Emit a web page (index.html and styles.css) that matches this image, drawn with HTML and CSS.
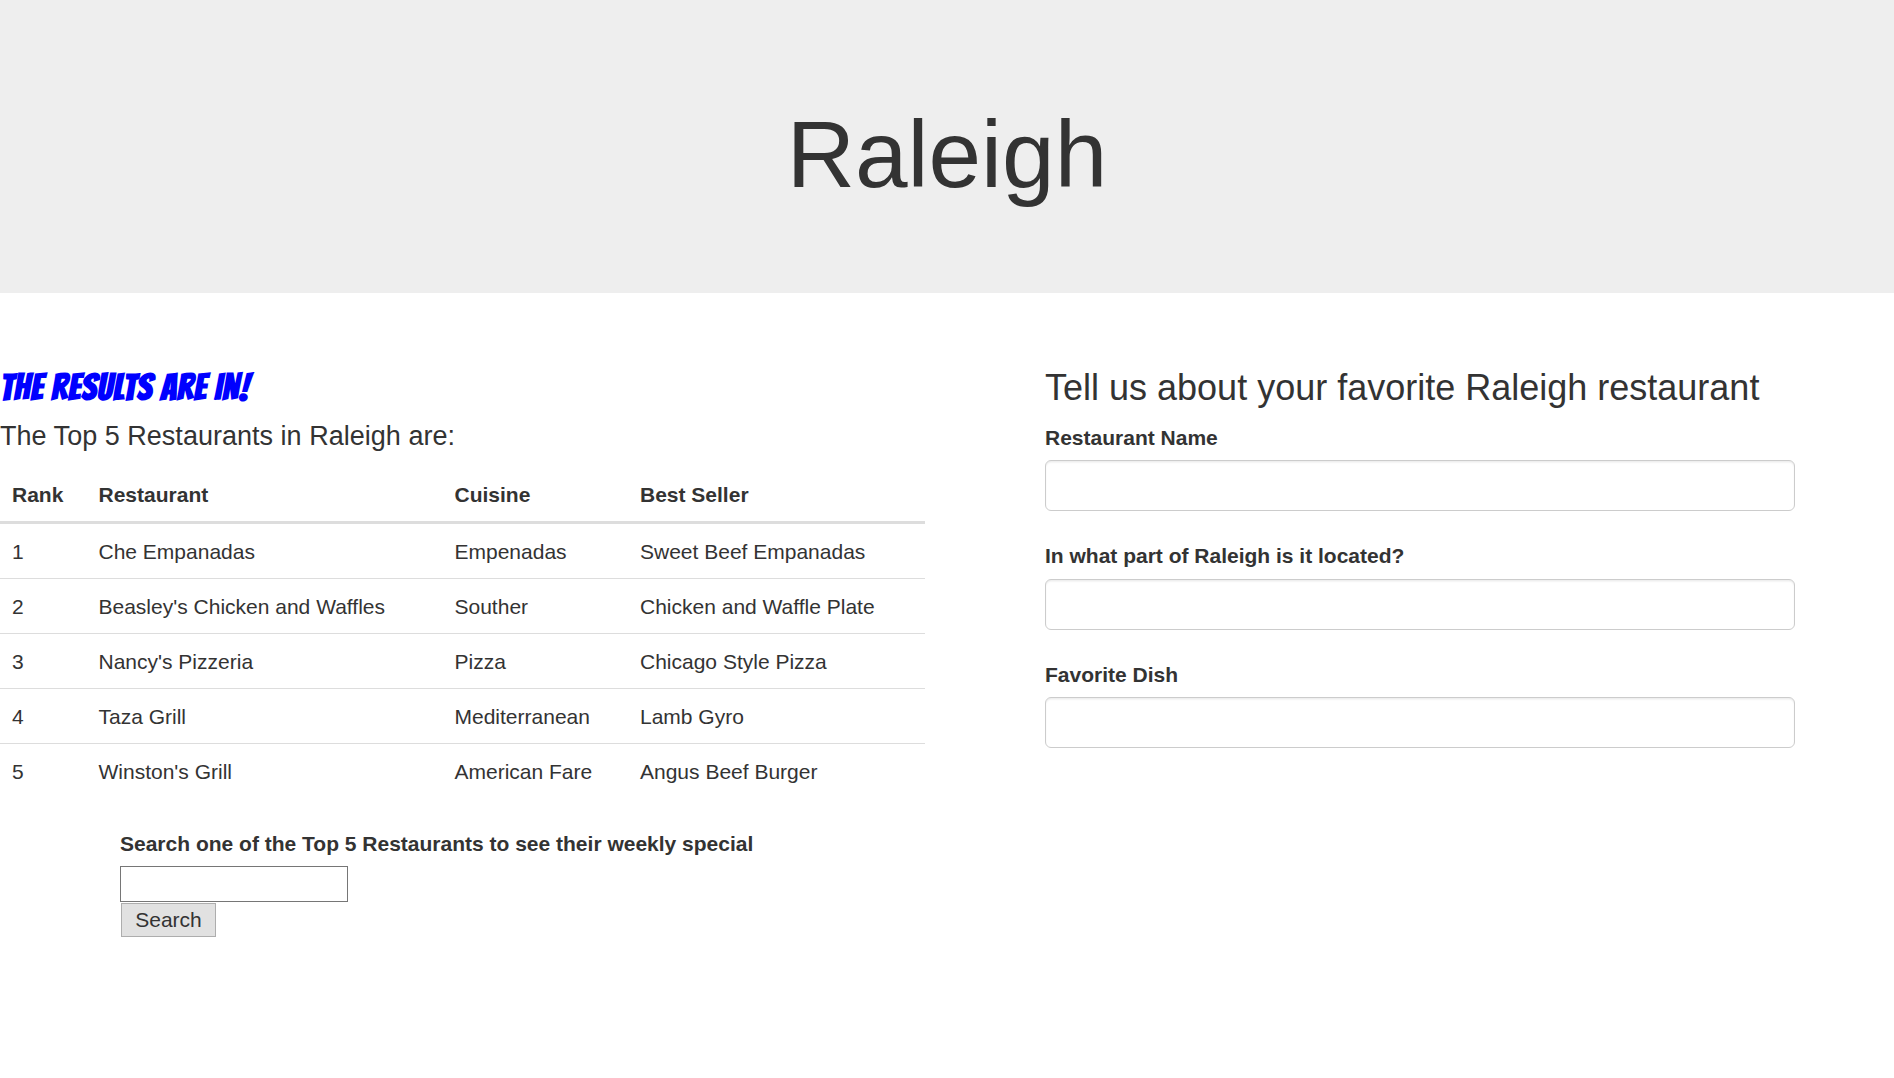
FILE: index.html
```html
<!DOCTYPE html>
<html lang="en">
<head>
<meta charset="utf-8">
<title>Raleigh</title>
<link rel="stylesheet" href="styles.css">
</head>
<body>
<header class="jumbotron"><h1>Raleigh</h1></header>
<main class="content">
  <section class="results">
    <h3 class="announcement">THE RESULTS ARE IN!</h3>
    <h4>The Top 5 Restaurants in Raleigh are:</h4>
    <table class="table">
      <colgroup><col class="col-rank"><col class="col-name"><col class="col-cuisine"><col></colgroup>
      <thead><tr><th>Rank</th><th>Restaurant</th><th>Cuisine</th><th>Best Seller</th></tr></thead>
      <tbody>
        <tr><td>1</td><td>Che Empanadas</td><td>Empenadas</td><td>Sweet Beef Empanadas</td></tr>
        <tr><td>2</td><td>Beasley's Chicken and Waffles</td><td>Souther</td><td>Chicken and Waffle Plate</td></tr>
        <tr><td>3</td><td>Nancy's Pizzeria</td><td>Pizza</td><td>Chicago Style Pizza</td></tr>
        <tr><td>4</td><td>Taza Grill</td><td>Mediterranean</td><td>Lamb Gyro</td></tr>
        <tr><td>5</td><td>Winston's Grill</td><td>American Fare</td><td>Angus Beef Burger</td></tr>
      </tbody>
    </table>
    <form class="search">
      <label for="special">Search one of the Top 5 Restaurants to see their weekly special</label>
      <input class="search-input" id="special" type="text">
      <button class="search-button" type="button">Search</button>
    </form>
  </section>
  <form class="favorite">
    <h3>Tell us about your favorite Raleigh restaurant</h3>
    <div class="form-group"><label for="name">Restaurant Name</label><input class="form-control" id="name" type="text"></div>
    <div class="form-group"><label for="area">In what part of Raleigh is it located?</label><input class="form-control" id="area" type="text"></div>
    <div class="form-group"><label for="dish">Favorite Dish</label><input class="form-control" id="dish" type="text"></div>
  </form>
</main>
</body>
</html>
```
FILE: styles.css
```css
* { box-sizing: border-box; }
body {
  margin: 0;
  font: 21px/30px "Liberation Sans", Arial, sans-serif;
  color: #333;
  background: #fff;
}
h1, h3, h4 { margin: 0; font-weight: 400; line-height: 1.1; }
h3 { font-size: 36px; height: 39.6px; margin-bottom: 15px; white-space: nowrap; }
h4 { font-size: 27px; height: 29.7px; margin: -.4px 0 15.4px; letter-spacing: .02px; }
.jumbotron {
  height: 293px;
  padding-top: 103px;
  background: #eee;
  text-align: center;
}
.jumbotron h1 { font-size: 94.5px; }
.content {
  display: grid;
  grid-template-columns: 925px 750px;
  column-gap: 120px;
  padding-top: 75px;
}
.announcement {
  color: #00f;
  font-family: Bangers, cursive;
  font-weight: 700;
  letter-spacing: .74px;
}
.table {
  width: 925px;
  margin-bottom: 30px;
  table-layout: fixed;
  border-collapse: separate;
  border-spacing: 0;
}
.col-rank { width: 86.5px; }
.col-name { width: 356px; }
.col-cuisine { width: 185.5px; }
.table th, .table td { padding: 13px 12px 11px; text-align: left; }
.table th { border-bottom: 3px solid #ddd; }
.table td { height: 55px; border-top: 1px solid #ddd; }
.table tbody tr:first-child td { height: 54px; border-top: 0; }
label { display: block; padding-top: .4px; margin-bottom: 7.1px; font-weight: 700; }
.search {
  display: flex;
  flex-direction: column;
  align-items: flex-start;
  padding-left: 120px;
}
.search-input { width: 228px; height: 36px; border: 1px solid #767676; background: #fff; }
.search-button {
  width: 95px;
  height: 34px;
  margin: 1px;
  padding: 0;
  border: 1px solid #adadad;
  background: #e1e1e1;
  color: #333;
  font: inherit;
}
.form-group { margin-bottom: 30px; }
.form-control {
  display: block;
  width: 100%;
  height: 51px;
  border: 1px solid #ccc;
  border-radius: 6px;
  background: #fff;
  box-shadow: inset 0 1.5px 1.5px rgba(0, 0, 0, .075);
}
```
